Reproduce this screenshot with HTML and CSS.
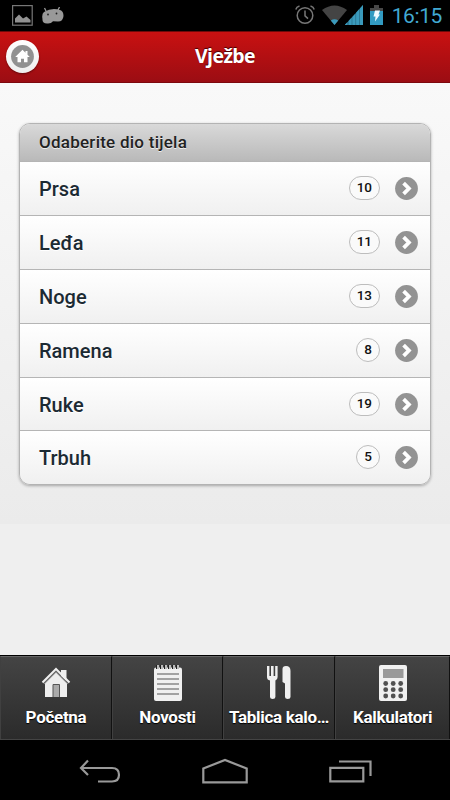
FILE: index.html
```html
<!DOCTYPE html>
<html lang="hr">
    <head>
        <title>Vježbe</title>
        <meta charset="UTF-8">
        <meta name="viewport" content="width=device-width, initial-scale=1">

        <link rel="stylesheet" href="styles.css">
    </head>
    <body>

        <!-- shared icons -->
        <svg class="sprite">
            <symbol id="arrow" viewBox="0 0 23 23">
                <circle cx="11.5" cy="11.5" r="11.4" fill="#939393"/>
                <path d="M8.6 6.2l5.3 5.3-5.3 5.3" fill="none" stroke="#fff" stroke-width="3.8"/>
            </symbol>
        </svg>

        <div class="status-bar">
            <div class="status-left">
                <svg width="21" height="21" viewBox="0 0 21 21">
                    <rect x=".6" y=".6" width="19.6" height="19.6" fill="none" stroke="#777" stroke-width="1.2"/>
                    <path d="M3 17.5v-4l4-4 4 4 3.500-2 4 3.500v2.500z" fill="#929292"/>
                </svg>
                <svg width="22" height="18" viewBox="0 0 22 18">
                    <path d="M2.500 1l2 4M17.500 0l-2 4" stroke="#999" stroke-width="1.300"/>
                    <path d="M2 5Q10 0 18 3Q21.500 4 21.500 9Q21 14.500 16 14.500L11 14.200Q9 17 5 16.500Q0 16 .5 12Q-.5 7 2 5z" fill="#999"/>
                    <circle cx="6" cy="7.500" r=".9" fill="#222"/>
                    <circle cx="14.500" cy="6.500" r=".9" fill="#222"/>
                </svg>
            </div>
            <div class="status-right">
                <svg class="icon-alarm" width="20" height="20" viewBox="0 0 20 20" fill="none" stroke="#777" stroke-width="1.500">
                    <circle cx="10" cy="10.500" r="7.800"/>
                    <path d="M10 5.500v5.300l3 2.800M.8 4.500Q1.500 1.800 4.500 1M19.200 4.500Q18.500 1.800 15.500 1"/>
                </svg>
                <svg class="icon-wifi" width="25" height="20" viewBox="0 0 25 20">
                    <path d="M0 5Q12.500-4 25 5L12.500 20z" fill="#444"/>
                    <path d="M8.800 15.500Q12.500 13 16.200 15.500L12.500 20z" fill="#3a9abc"/>
                </svg>
                <svg class="icon-signal" width="18" height="20" viewBox="0 0 18 20">
                    <path d="M0 20L18 0v20z" fill="#24647c"/>
                    <path d="M0 20v-.5L2.500 17v3zM3.500 20v-4L6.700 12.500V20zM7.300 20v-8L10.500 8.500V20zM11.100 20V7.800L14.300 4V20zM14.900 20V3.500L18 0v20z" fill="#3a9abc"/>
                </svg>
                <svg class="icon-battery" width="13" height="20" viewBox="0 0 13 20">
                    <path d="M0 3h4V0h5v3h4v5H0z" fill="#484848"/>
                    <path d="M0 6h13v14H0z" fill="#329bc2"/>
                    <path d="M5 5.500h5L8.500 9.500H10L5 16.500L5.500 11.500H3.500z" fill="#eefaff"/>
                </svg>
                <span class="clock">16:15</span>
            </div>
        </div>

        <div class="header">
            <a href="#" class="home-button">
                <svg width="23" height="23" viewBox="0 0 23 23">
                    <circle cx="11.500" cy="11.500" r="11.400" fill="#919191"/>
                    <path d="M11.500 4.800L4.200 12h2.300v5.300H10v-3.500h3v3.500h3.500V12h2.300l-2.300-2.300V6h-2v1.800z" fill="#fff"/>
                </svg>
            </a>
            <h1 class="title">Vježbe</h1>
        </div>

        <div class="content">
            <ul class="list">
                <li class="list-head">Odaberite dio tijela</li>
                <li class="list-item"><span class="name">Prsa</span><span class="count">10</span><svg class="arrow"><use href="#arrow"/></svg></li>
                <li class="list-item"><span class="name">Leđa</span><span class="count">11</span><svg class="arrow"><use href="#arrow"/></svg></li>
                <li class="list-item"><span class="name">Noge</span><span class="count">13</span><svg class="arrow"><use href="#arrow"/></svg></li>
                <li class="list-item"><span class="name">Ramena</span><span class="count">8</span><svg class="arrow"><use href="#arrow"/></svg></li>
                <li class="list-item"><span class="name">Ruke</span><span class="count">19</span><svg class="arrow"><use href="#arrow"/></svg></li>
                <li class="list-item"><span class="name">Trbuh</span><span class="count">5</span><svg class="arrow"><use href="#arrow"/></svg></li>
            </ul>
        </div>

        <div class="footer">
            <a href="#" class="tab">
                <svg width="30" height="38" viewBox="0 0 30 38">
                    <path d="M4 18L15 7l11 11v14H4z" fill="#eee"/>
                    <path d="M20 5h5.500v11l-5.500-5z" fill="#eee"/>
                    <path d="M3 18.800L15 6.800l12 12" fill="none" stroke="#888" stroke-width="1.200"/>
                    <path d="M1.500 17.500L15 4l13.500 13.500" fill="none" stroke="#f0f0f0" stroke-width="2"/>
                    <path d="M12 32V19.500h6.500V32" fill="#aaa" stroke="#555"/>
                </svg>
                <span class="tab-label">Početna</span>
            </a>
            <a href="#" class="tab">
                <svg width="30" height="38" viewBox="0 0 30 38">
                    <rect x="1" y="2.500" width="28" height="33.500" rx="2" fill="#f0f0f0"/>
                    <path d="M4.500 0v4M8.500 0v4M12.500 0v4M16.500 0v4M20.500 0v4M24.500 0v4" stroke="#222" stroke-width="3"/>
                    <path d="M5 0v4M9 0v4M13 0v4M17 0v4M21 0v4M25 0v4" stroke="#f0f0f0" stroke-width="1.500"/>
                    <path d="M4 9h22M4 14h22M4 19h22M4 24h22M4 29h22" stroke="#888" stroke-width="1.600"/>
                </svg>
                <span class="tab-label">Novosti</span>
            </a>
            <a href="#" class="tab">
                <svg width="30" height="38" viewBox="0 0 30 38">
                    <path d="M3 1h2.400v10h1.600V1h2.600v10h1.600V1h2.400v11q0 3-2.200 3.500V32q0 2-2.700 2T6 32V15.500Q3 15 3 12z" fill="#f0f0f0"/>
                    <path d="M18.500 17V4Q18.500 1 22 1q4.500 0 4.500 5v26q0 2-2.700 2T21 32V18.500z" fill="#f0f0f0"/>
                </svg>
                <span class="tab-label">Tablica kalo…</span>
            </a>
            <a href="#" class="tab">
                <svg width="30" height="38" viewBox="0 0 30 38">
                    <rect x="1" y="0" width="28" height="36" rx="2" fill="#f0f0f0"/>
                    <rect x="5" y="4" width="20.500" height="9" fill="#999"/>
                    <g fill="#505050">
                        <circle cx="7.700" cy="18.500" r="2.400"/><circle cx="15.200" cy="18.500" r="2.400"/><circle cx="22.700" cy="18.500" r="2.400"/>
                        <circle cx="7.700" cy="24.700" r="2.400"/><circle cx="15.200" cy="24.700" r="2.400"/><circle cx="22.700" cy="24.700" r="2.400"/>
                        <circle cx="7.700" cy="31" r="2.400"/><circle cx="15.200" cy="31" r="2.400"/><circle cx="22.700" cy="31" r="2.400"/>
                    </g>
                </svg>
                <span class="tab-label">Kalkulatori</span>
            </a>
        </div>

        <div class="nav-bar">
            <svg width="42" height="24" viewBox="0 0 42 24" fill="none" stroke="#999" stroke-width="2.200">
                <path d="M9 1.500L2 9l7 7M2 9h31q7 0 7 6.700T33 22.500H19"/>
            </svg>
            <svg width="46" height="26" viewBox="0 0 46 26" fill="none" stroke="#999" stroke-width="2.200">
                <path d="M1.300 24.300V10.500L23 2l21.700 8.500v13.800z"/>
            </svg>
            <svg width="44" height="24" viewBox="0 0 44 24" fill="none" stroke="#999" stroke-width="2.200">
                <path d="M1.300 8.800h33v13.500h-33zM10 2.500h31.500V17"/>
            </svg>
        </div>

    </body>
</html>
```
FILE: styles.css
```css
body{
    margin: 0;
    height: 800px;
    display: flex;
    flex-direction: column;
    overflow: hidden;
    font-family: Roboto, sans-serif;
    background: #000;
}

svg{
    display: block;
    flex: none;
}

a{
    color: inherit;
    text-decoration: none;
}

.sprite{
    display: none;
}

/* status bar */
.status-bar{
    height: 31px;
    flex: none;
    display: flex;
    justify-content: space-between;
    padding: 0 8px 0 12px;
}

.status-left{
    display: flex;
    gap: 9px;
    padding-top: 5px;
}

.status-left svg + svg{
    margin-top: 2px;
}

.status-right{
    display: flex;
    align-items: flex-start;
    padding-top: 5px;
}

.icon-alarm{
    margin-right: 7px;
}

.icon-signal{
    margin-left: -2px;
}

.icon-battery{
    margin: 0 9px 0 7px;
}

.clock{
    font-size: 21px;
    line-height: 22px;
    letter-spacing: -0.4px;
    color: #42a9d2;
}

/* header */
.header{
    box-sizing: border-box;
    height: 52px;
    flex: none;
    display: grid;
    grid-template-columns: 40px 1fr 40px;
    align-items: center;
    border-top: 1px solid #6d0909;
    border-bottom: 1px solid #7d090e;
    background: linear-gradient(#c91111, #9b0d13);
}

.home-button{
    box-sizing: border-box;
    width: 33px;
    height: 33px;
    margin: 0 0 2px 6px;
    padding: 5px;
    border-radius: 50%;
    background: linear-gradient(#fff, #eee);
    box-shadow: 0 1px 2px rgba(0, 0, 0, .4);
}

.title{
    margin: 0 0 3px;
    font-family: "Open Sans", sans-serif;
    font-size: 19.5px;
    font-weight: bold;
    line-height: 24px;
    letter-spacing: -0.6px;
    text-align: center;
    color: #fff;
    text-shadow: 0 -1px 1px #400;
}

/* content */
.content{
    box-sizing: border-box;
    height: 572px;
    flex: none;
    padding: 40px 19px 0;
    background: linear-gradient(#f9f9f9, #ebebeb 441px, #efefef 441px);
}

.list{
    list-style: none;
    margin: 0;
    padding: 0;
    border: 1px solid #b3b3b3;
    border-radius: 11px;
    overflow: hidden;
    box-shadow: 0 1px 3px rgba(0, 0, 0, .3);
}

.list-head{
    height: 37px;
    padding-left: 19px;
    font-size: 17px;
    font-weight: 500;
    letter-spacing: 0.25px;
    line-height: 37px;
    color: #222;
    text-shadow: 0 1px 0 #eee;
    background: linear-gradient(#d9d9d9, #b9b9b9);
}

.list-item{
    box-sizing: border-box;
    height: 53.9px;
    display: flex;
    align-items: center;
    padding: 0 12px 0 19px;
    border-top: 1px solid #b5b5b5;
    background: linear-gradient(#fff, #f0f0f0);
}

.name{
    flex: 1;
    padding-top: 1px;
    font-size: 20px;
    font-weight: 500;
    color: #1c2a33;
    text-shadow: 0 1px 0 #fff;
}

.count{
    box-sizing: border-box;
    height: 24px;
    margin: 0 15px 1px 0;
    padding: 0 7px;
    border: 1px solid #bdbdbd;
    border-radius: 12px;
    font-size: 13.5px;
    font-weight: 500;
    line-height: 21px;
    color: #111;
    background: #fafafa;
}

.arrow{
    width: 23px;
    height: 23px;
}

/* bottom tabs */
.footer{
    box-sizing: border-box;
    height: 85px;
    flex: none;
    display: grid;
    grid-template-columns: 112px 111px 112px 115px;
    border-top: 1px solid #000;
    border-bottom: 1px solid #444;
}

.tab{
    display: flex;
    flex-direction: column;
    align-items: center;
    padding-top: 8px;
    border-top: 1px solid #666;
    border-left: 1px solid #404040;
    border-right: 1px solid #111;
    background: linear-gradient(#444, #2b2b2b);
}

.tab-label{
    margin-top: 2px;
    font-size: 17px;
    font-weight: bold;
    line-height: 24px;
    letter-spacing: -0.3px;
    white-space: nowrap;
    color: #fff;
    text-shadow: 0 1px 1px #000;
}

/* android buttons */
.nav-bar{
    box-sizing: border-box;
    height: 60px;
    flex: none;
    display: flex;
    justify-content: center;
    align-items: center;
    gap: 81px;
    padding: 2px 0 0 1px;
}
```
